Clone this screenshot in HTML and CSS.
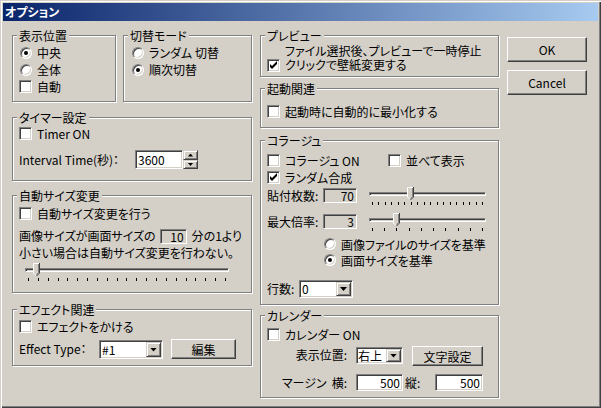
FILE: index.html
```html
<!DOCTYPE html>
<html lang="ja">
<head>
  <meta charset="UTF-8">
  <title>オプション</title>
  <link rel="stylesheet" href="styles.css">
</head>
<body>
<div class="window">
  <div class="titlebar">オプション</div>

  <div class="client">

    <!-- left column -->
    <div class="col-left">
      <div class="row-top">
        <div class="group g-pos">
          <div class="legend">表示位置</div>
          <div class="stack">
            <div class="opt"><span class="radio on"></span>中央</div>
            <div class="opt"><span class="radio"></span>全体</div>
            <div class="opt"><span class="check"></span>自動</div>
          </div>
        </div>
        <div class="group g-switch">
          <div class="legend">切替モード</div>
          <div class="stack">
            <div class="opt"><span class="radio"></span>ランダム 切替</div>
            <div class="opt"><span class="radio on"></span>順次切替</div>
          </div>
        </div>
      </div>

      <div class="group g-timer">
        <div class="legend">タイマー設定</div>
        <div class="inner">
          <div class="opt"><span class="check"></span>Timer ON</div>
          <div class="field-row interval">
            <span class="lbl w-interval">Interval Time(秒)：</span>
            <span class="edit e-interval">3600</span>
            <span class="spin">
              <span class="spin-btn up"><i></i></span>
              <span class="spin-btn down"><i></i></span>
            </span>
          </div>
        </div>
      </div>

      <div class="group g-autosize">
        <div class="legend">自動サイズ変更</div>
        <div class="inner">
          <div class="opt"><span class="check"></span>自動サイズ変更を行う</div>
          <div class="para">
            画像サイズが画面サイズの<span class="edit ro e-ratio">10</span>分の1より<br>
            小さい場合は自動サイズ変更を行わない。
          </div>
          <div class="slider s-auto">
            <div class="track"></div>
            <div class="thumb" style="left: 8px">
              <svg width="7" height="14" viewBox="0 0 7 14"><path d="M0 0H7V10L3.5 13.5L0 10Z" fill="#D4D0C8"/><path d="M0.5 10V0.5H6" fill="none" stroke="#fff"/><path d="M0.5 10L3 12.5" fill="none" stroke="#fff"/><path d="M6.5 0V10L3.5 13" fill="none" stroke="#404040"/><path d="M5.5 1V9.6L3.5 11.6" fill="none" stroke="#808080"/></svg>
            </div>
            <div class="ticks"><i></i><i></i><i></i><i></i><i></i><i></i><i></i><i></i><i></i><i></i><i></i><i></i><i></i><i></i><i></i><i></i><i></i><i></i><i></i><i></i><i></i></div>
          </div>
        </div>
      </div>

      <div class="group g-effect">
        <div class="legend">エフェクト関連</div>
        <div class="inner">
          <div class="opt"><span class="check"></span>エフェクトをかける</div>
          <div class="field-row effect">
            <span class="lbl w-effect">Effect Type：</span>
            <span class="combo c-effect"><span class="val">#1</span><span class="drop"><i></i></span></span>
            <span class="btn b-edit">編集</span>
          </div>
        </div>
      </div>
    </div>

    <!-- right column -->
    <div class="col-right">
      <div class="group g-preview">
        <div class="legend">プレビュー</div>
        <div class="inner">
          <div class="opt two-line">
            <span class="check"><svg width="11" height="11" viewBox="0 0 11 11"><path d="M2 4L4 6L9 1V4L4 9L2 7Z" fill="#000"/></svg></span>
            <span class="two-text">ファイル選択後、プレビューで一時停止<br>クリックで壁紙変更する</span>
          </div>
        </div>
      </div>

      <div class="group g-startup">
        <div class="legend">起動関連</div>
        <div class="inner">
          <div class="opt"><span class="check"></span>起動時に自動的に最小化する</div>
        </div>
      </div>

      <div class="group g-collage">
        <div class="legend">コラージュ</div>
        <div class="inner">
          <div class="pair">
            <div class="opt first"><span class="check"></span>コラージュ ON</div>
            <div class="opt"><span class="check"></span>並べて表示</div>
          </div>
          <div class="opt">
            <span class="check"><svg width="11" height="11" viewBox="0 0 11 11"><path d="M2 4L4 6L9 1V4L4 9L2 7Z" fill="#000"/></svg></span>ランダム合成
          </div>
          <div class="slider-row r-count">
            <span class="lbl w-collage">貼付枚数:</span>
            <span class="edit ro e-small">70</span>
            <div class="slider s-collage">
              <div class="track"></div>
              <div class="thumb" style="left: 38px">
                <svg width="7" height="14" viewBox="0 0 7 14"><path d="M0 0H7V10L3.5 13.5L0 10Z" fill="#D4D0C8"/><path d="M0.5 10V0.5H6" fill="none" stroke="#fff"/><path d="M0.5 10L3 12.5" fill="none" stroke="#fff"/><path d="M6.5 0V10L3.5 13" fill="none" stroke="#404040"/><path d="M5.5 1V9.6L3.5 11.6" fill="none" stroke="#808080"/></svg>
              </div>
              <div class="ticks"><i></i><i></i><i></i><i></i><i></i><i></i><i></i><i></i><i></i><i></i><i></i><i></i><i></i><i></i><i></i><i></i><i></i><i></i></div>
            </div>
          </div>
          <div class="slider-row r-scale">
            <span class="lbl w-collage">最大倍率:</span>
            <span class="edit ro e-small">3</span>
            <div class="slider s-collage">
              <div class="track"></div>
              <div class="thumb" style="left: 24px">
                <svg width="7" height="14" viewBox="0 0 7 14"><path d="M0 0H7V10L3.5 13.5L0 10Z" fill="#D4D0C8"/><path d="M0.5 10V0.5H6" fill="none" stroke="#fff"/><path d="M0.5 10L3 12.5" fill="none" stroke="#fff"/><path d="M6.5 0V10L3.5 13" fill="none" stroke="#404040"/><path d="M5.5 1V9.6L3.5 11.6" fill="none" stroke="#808080"/></svg>
              </div>
              <div class="ticks"><i></i><i></i><i></i><i></i><i></i><i></i><i></i><i></i><i></i><i></i></div>
            </div>
          </div>
          <div class="radios">
            <div class="opt short"><span class="radio"></span>画像ファイルのサイズを基準</div>
            <div class="opt short"><span class="radio on"></span>画面サイズを基準</div>
          </div>
          <div class="field-row rows">
            <span class="lbl w-rows">行数:</span>
            <span class="combo c-rows"><span class="val">0</span><span class="drop"><i></i></span></span>
          </div>
        </div>
      </div>

      <div class="group g-calendar">
        <div class="legend">カレンダー</div>
        <div class="inner">
          <div class="opt"><span class="check"></span>カレンダー ON</div>
          <div class="field-row cal-pos">
            <span class="lbl lbl-r">表示位置:</span>
            <span class="combo c-pos"><span class="val">右上</span><span class="drop"><i></i></span></span>
            <span class="btn b-font">文字設定</span>
          </div>
          <div class="field-row cal-margin">
            <span class="lbl lbl-r">マージン<span class="gap">横:</span></span>
            <span class="edit e-margin">500</span>
            <span class="lbl w-tate">縦:</span>
            <span class="edit e-margin2">500</span>
          </div>
        </div>
      </div>
    </div>

    <!-- buttons -->
    <div class="col-buttons">
      <div class="btn b-dialog">OK</div>
      <div class="btn b-dialog b-cancel">Cancel</div>
    </div>

  </div>
</div>
</body>
</html>
```

FILE: styles.css
```css
* {
  box-sizing: border-box;
}

body {
  margin: 0;
  background: #D4D0C8;
  font-family: "Noto Sans CJK JP", "Noto Sans", sans-serif;
  font-size: 12px;
  font-feature-settings: "palt";
  color: #000;
}

.window {
  width: 601px;
  height: 408px;
  padding: 3px;
  background: #D4D0C8;
  box-shadow: inset 1px 1px #D4D0C8, inset 2px 2px #fff, inset -1px -1px #404040, inset -2px -2px #808080;
}

.titlebar {
  height: 18px;
  padding-left: 2px;
  background: linear-gradient(to right, #0A246A, #A6CAF0);
  color: #fff;
  font-weight: bold;
  line-height: 18px;
}

.client {
  display: flex;
  padding: 14px 0 0 9px;
}

.col-left {
  width: 240px;
}

.col-right {
  width: 239px;
  margin-left: 8px;
}

.col-buttons {
  width: 80px;
  margin-left: 8px;
  padding-top: 2px;
}

/* group boxes */
.group {
  border: 1px solid #808080;
  box-shadow: inset 1px 1px #fff, 1px 1px #fff;
}

.legend {
  display: table;
  margin: -7px 0 0 4px;
  padding: 0 2px;
  height: 13px;
  line-height: 13px;
  background: #D4D0C8;
  white-space: nowrap;
}

.inner,
.stack {
  padding-left: 6px;
}

.row-top {
  display: flex;
  gap: 7px;
}

.g-pos { width: 104px; height: 67px; }
.g-switch { width: 129px; height: 67px; }
.g-switch .stack { padding-left: 7px; }
.stack { margin-top: 2px; }

.g-timer { margin-top: 15px; height: 64px; }
.g-timer .inner { padding-top: 1px; }
.g-timer .opt { height: 16px; }
.g-autosize { margin-top: 14px; height: 98px; }
.g-autosize .inner { padding-top: 3px; }
.g-effect { margin-top: 16px; height: 57px; }
.g-effect .inner { padding-top: 2px; }

.g-preview { height: 42px; }
.g-preview .inner { padding-top: 3px; }
.g-startup { margin-top: 11px; height: 40px; }
.g-startup .inner { padding-top: 8px; }
.g-collage { margin-top: 12px; height: 165px; }
.g-collage .inner { padding-top: 5px; }
.g-calendar { margin-top: 10px; height: 83px; }
.g-calendar .inner { padding-top: 4px; }

/* options */
.opt {
  display: flex;
  align-items: center;
  height: 17px;
  white-space: nowrap;
}

.opt.two-line {
  height: 28px;
  align-items: flex-end;
  line-height: 14px;
}

.opt.two-line .check {
  margin-bottom: 1px;
}

.two-text {
  font-family: "Liberation Sans", "Noto Sans CJK JP", sans-serif;
}

.opt.short {
  height: 16px;
}

.radio {
  position: relative;
  flex: none;
  width: 12px;
  height: 12px;
  margin: 0 5px 0 1px;
  border-radius: 50%;
  background: #fff;
  border: 1px solid;
  border-color: #808080 #fff #fff #808080;
  box-shadow: inset 1px 1px #404040, inset -1px -1px #D4D0C8;
}

.radio.on::after {
  content: "";
  position: absolute;
  left: 3px;
  top: 3px;
  width: 4px;
  height: 4px;
  border-radius: 50%;
  background: #000;
}

.check {
  flex: none;
  width: 13px;
  height: 13px;
  margin-right: 5px;
  background: #fff;
  border: 1px solid;
  border-color: #808080 #fff #fff #808080;
  box-shadow: inset 1px 1px #404040, inset -1px -1px #D4D0C8;
}

.check svg {
  display: block;
}

/* fields */
.field-row {
  display: flex;
  align-items: flex-start;
  white-space: nowrap;
}

.lbl {
  flex: none;
}

.edit {
  flex: none;
  height: 19px;
  padding: 0 2px;
  line-height: 17px;
  background: #fff;
  border: 1px solid;
  border-color: #808080 #fff #fff #808080;
  box-shadow: inset 1px 1px #404040, inset -1px -1px #D4D0C8;
}

.edit.ro {
  background: #D4D0C8;
  text-align: right;
  height: 15px;
  line-height: 13px;
}

.interval {
  margin-top: 9px;
}

.interval .lbl {
  line-height: 19px;
}

.w-interval { width: 116px; }
.e-interval { width: 48px; }

.spin {
  display: flex;
  flex-direction: column;
  width: 15px;
  height: 19px;
}

.spin-btn,
.combo .drop {
  display: flex;
  align-items: center;
  justify-content: center;
  background: #D4D0C8;
  border: 1px solid;
  border-color: #D4D0C8 #404040 #404040 #D4D0C8;
  box-shadow: inset 1px 1px #fff, inset -1px -1px #808080;
}

.spin-btn.up { height: 10px; }
.spin-btn.down { height: 9px; }

.spin-btn i {
  width: 5px;
  height: 3px;
  background: #000;
}

.spin-btn.up i { clip-path: polygon(50% 0, 100% 100%, 0 100%); }
.spin-btn.down i { clip-path: polygon(0 0, 100% 0, 50% 100%); }

.para {
  margin-top: 5px;
  line-height: 17px;
  white-space: nowrap;
}

.e-ratio {
  display: inline-block;
  vertical-align: top;
  width: 27px;
  margin: 2px 5px 0 4px;
}

/* combo box */
.combo {
  flex: none;
  display: flex;
  padding: 1px;
  background: #fff;
  border: 1px solid;
  border-color: #808080 #fff #fff #808080;
  box-shadow: inset 1px 1px #404040, inset -1px -1px #D4D0C8;
}

.combo .val {
  flex: 1;
  padding-left: 1px;
}

.combo .drop {
  width: 15px;
}

.combo .drop i {
  width: 7px;
  height: 4px;
  background: #000;
  clip-path: polygon(0 0, 100% 0, 50% 100%);
}

/* push buttons */
.btn {
  flex: none;
  display: flex;
  align-items: center;
  justify-content: center;
  background: #D4D0C8;
  border: 1px solid;
  border-color: #fff #404040 #404040 #fff;
  box-shadow: inset -1px -1px #808080;
}

.effect {
  margin-top: 4px;
}

.w-effect {
  width: 80px;
  line-height: 20px;
}

.c-effect {
  width: 64px;
  height: 19px;
  margin-top: 1px;
  line-height: 15px;
}

.b-edit {
  width: 65px;
  height: 20px;
  margin-left: 8px;
}

.b-dialog {
  width: 80px;
  height: 25px;
}

.b-cancel {
  margin-top: 8px;
}

/* sliders */
.slider {
  position: relative;
  flex: none;
  height: 19px;
}

.s-auto {
  width: 204px;
  margin: 2px 0 0 6px;
}

.s-collage {
  width: 117px;
  margin-left: 12px;
}

.track {
  position: absolute;
  left: 0;
  right: 0;
  top: 5px;
  height: 4px;
  background: #D4D0C8;
  border: 1px solid;
  border-color: #808080 #fff #fff #808080;
  box-shadow: inset 1px 1px #404040;
}

.thumb {
  position: absolute;
  top: 0;
  width: 7px;
  height: 14px;
}

.thumb svg {
  display: block;
}

.ticks {
  position: absolute;
  left: 3px;
  right: 3px;
  top: 15px;
  display: flex;
  justify-content: space-between;
}

.ticks i {
  width: 1px;
  height: 3px;
  background: #000;
}

/* collage */
.pair {
  display: flex;
}

.pair .first {
  width: 121px;
}

.slider-row {
  display: flex;
  align-items: flex-start;
  white-space: nowrap;
}

.r-count {
  margin-top: 1px;
  height: 26px;
}

.r-scale {
  height: 23px;
}

.slider-row .lbl,
.slider-row .edit {
  margin-top: 1px;
}

.slider-row .lbl {
  line-height: 15px;
}

.w-collage { width: 56px; }
.e-small { width: 34px; }

.radios {
  padding-left: 56px;
}

.rows {
  margin-top: 12px;
}

.w-rows {
  width: 32px;
  line-height: 18px;
}

.c-rows {
  width: 54px;
  height: 18px;
  line-height: 14px;
}

/* calendar */
.cal-pos {
  margin-top: 3px;
}

.lbl-r {
  width: 89px;
  padding-right: 9px;
  text-align: right;
}

.cal-pos .lbl-r {
  line-height: 18px;
}

.c-pos {
  width: 47px;
  height: 17px;
  margin-top: 1px;
  line-height: 13px;
}

.c-pos .val {
  padding-left: 0;
}

.b-font {
  width: 71px;
  height: 20px;
  margin-left: 9px;
}

.cal-margin {
  margin-top: 8px;
}

.cal-margin .lbl {
  line-height: 17px;
}

.gap {
  margin-left: 5px;
}

.cal-margin .edit {
  height: 17px;
  line-height: 15px;
  text-align: right;
}

.e-margin { width: 47px; }
.e-margin2 { width: 48px; }

.w-tate {
  width: 32px;
  padding-left: 2px;
}
```
